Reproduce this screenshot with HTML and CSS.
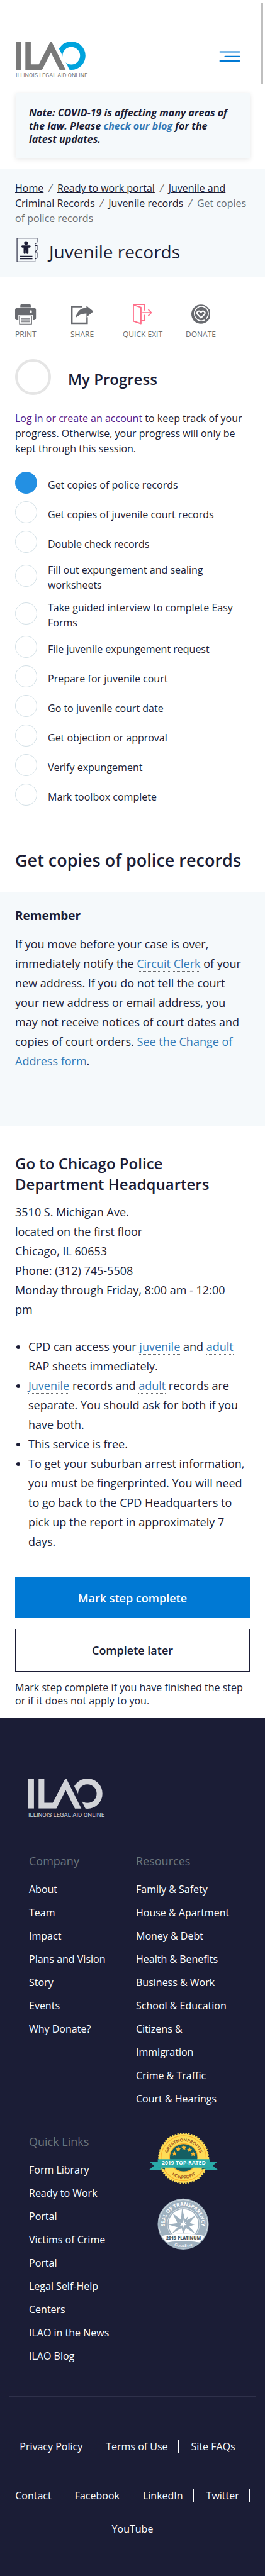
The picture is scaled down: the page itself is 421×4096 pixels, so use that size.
FILE: index.html
```html
<!DOCTYPE html>
<html lang="en">
<head>
<meta charset="utf-8">
<meta name="viewport" content="width=device-width, initial-scale=1">
<title>Get copies of police records | Illinois Legal Aid Online</title>
<link rel="stylesheet" href="styles.css">
</head>
<body>
<svg class="defs" aria-hidden="true">
  <defs>
    <clipPath id="ring-cut"><path d="M63 0H112V46H86Z"/></clipPath>
    <clipPath id="mark-cut"><path d="M0 0H112V45H0Z"/></clipPath>
    <symbol id="logo" class="logo-symbol" viewBox="0 0 112 58">
      <g clip-path="url(#mark-cut)" fill="none" stroke="currentColor">
        <path stroke-width="8.4" d="M4.2 0V45"/>
        <path stroke-width="8.600" d="M19.6 -2V40.6H39.2L56 8L77 50"/>
      </g>
      <circle class="logo-ring" cx="88.3" cy="22.6" r="18.2" fill="none" stroke-width="8.6" clip-path="url(#ring-cut)"/>
      <text class="logo-name" x="0" y="57">ILLINOIS LEGAL AID ONLINE</text>
    </symbol>
    <path id="star" d="M0 -20L6 -7L20 -5L10 5L12 18L0 12L-12 18L-10 5L-20 -5L-6 -7Z"/>
  </defs>
</svg>
<div class="scroll-thumb" aria-hidden="true"></div>

<header class="site-header">
  <a class="logo" href="#" aria-label="Illinois Legal Aid Online"><svg viewBox="0 0 112 58"><use href="#logo"/></svg></a>
  <button class="menu-button" type="button" aria-label="Menu">
    <svg viewBox="0 0 34 18"><path d="M1.500 1.500H32.500M9.500 8.700H32.500M1.500 15.900H32.500"/></svg>
  </button>
</header>

<p class="notice">Note: COVID-19 is affecting many areas of the law. Please <a href="#">check our blog</a> for the latest updates.</p>

<section class="intro">
  <nav class="breadcrumb" aria-label="Breadcrumb">
    <a href="#">Home</a><i>/</i> <a href="#">Ready to work portal</a><i>/</i> <a href="#">Juvenile and Criminal Records</a><i>/</i> <a href="#">Juvenile records</a><i>/</i> <span>Get copies of police records</span>
  </nav>
  <div class="topic">
    <svg class="topic-icon" viewBox="0 0 122 142" aria-hidden="true">
      <g fill="none" stroke="#1b1d36" stroke-width="4">
        <path d="M120 3H3V139H107V38Q107 34 112 33Q119 32 119 24V3"/>
        <path d="M107 45H119V69Q119 75 108 78M107 88H119V113Q119 119 108 123"/>
        <path d="M18 107H92M18 122H92" stroke-width="5"/>
      </g>
      <g fill="#1b1d36"><circle cx="55" cy="31" r="11"/><path d="M33 45H77Q82 46 82 51T77 57H69V88Q68 94 63 94T57 88V74H53V88Q52 94 47 94T41 88V57H33Q28 56 28 51T33 45Z"/></g>
    </svg>
    <h2>Juvenile records</h2>
  </div>
</section>

<main>
  <section class="content">
    <ul class="tools">
      <li><a href="#">
        <svg viewBox="0 0 166 164" aria-hidden="true"><g fill="#696b70"><path d="M41 27V14Q42 1 55 0H110Q123 1 124 14V27Z"/><path d="M15 33H151Q165 34 165 48V115Q164 128 151 129H139V89H26V129H15Q1 128 0 115V48Q1 34 15 33Z"/></g><rect x="115" y="52" width="17" height="18" rx="3" fill="#fff"/><path d="M34 96H131V160H34Z" fill="#fff" stroke="#696b70" stroke-width="5"/><path d="M48 115H118M48 129H118M48 143H118" stroke="#696b70" stroke-width="5"/></svg>
        PRINT</a></li>
      <li><a href="#">
        <svg viewBox="0 0 176 164" aria-hidden="true"><path d="M85 23H6V154H126V105" fill="none" stroke="#696b70" stroke-width="12"/><path d="M34 113Q52 32 121 32V15L176 60L121 106V77Q70 76 34 113Z" fill="#696b70"/></svg>
        SHARE</a></li>
      <li><a href="#">
        <svg viewBox="0 0 166 176" aria-hidden="true"><g fill="none" stroke="#ff708b" stroke-width="10" stroke-linejoin="round"><path d="M5 10Q5 5 12 5H101V57M101 93V144H73M5 10L69 30V168L5 147ZM81 75H156M131 49L157 75L131 102"/></g></svg>
        QUICK EXIT</a></li>
      <li><a href="#">
        <svg viewBox="0 0 154 166" aria-hidden="true"><circle cx="77" cy="83" r="77" fill="#696b70"/><g fill="none" stroke="#fff" stroke-width="8" stroke-linecap="round"><path d="M104 131A56 58 0 1 1 122 117"/><path d="M77 113L47 82C38 65 61 48 77 68C93 48 116 65 107 82Z" stroke-width="10"/></g></svg>
        DONATE</a></li>
    </ul>

    <div class="progress">
      <span class="progress-ring"></span>
      <h2>My Progress</h2>
    </div>
    <p class="login"><a href="#">Log in or create an account</a> to keep track of your progress. Otherwise, your progress will only be kept through this session.</p>

    <ol class="steps">
      <li class="current"><span>Get copies of police records</span></li>
      <li><span>Get copies of juvenile court records</span></li>
      <li><span>Double check records</span></li>
      <li><span>Fill out expungement and sealing worksheets</span></li>
      <li><span>Take guided interview to complete Easy Forms</span></li>
      <li><span>File juvenile expungement request</span></li>
      <li><span>Prepare for juvenile court</span></li>
      <li><span>Go to juvenile court date</span></li>
      <li><span>Get objection or approval</span></li>
      <li><span>Verify expungement</span></li>
      <li><span>Mark toolbox complete</span></li>
    </ol>
    <h1>Get copies of police records</h1>
  </section>

  <section class="remember">
    <h3>Remember</h3>
    <p>If you move before your case is over, immediately notify the <a class="term" href="#">Circuit Clerk</a> of your new address. If you do not tell the court your new address or email address, you may not receive notices of court dates and copies of court orders. <a href="#">See the Change of Address form</a>.</p>
  </section>

  <section class="content visit">
    <h2>Go to Chicago Police Department Headquarters</h2>
    <p class="address">3510 S. Michigan Ave.<br>located on the first floor<br>Chicago, IL 60653<br>Phone: (312) 745-5508<br>Monday through Friday, 8:00 am - 12:00 pm</p>
    <ul class="facts">
      <li>CPD can access your <a class="term" href="#">juvenile</a> and <a class="term" href="#">adult</a> RAP sheets immediately.</li>
      <li><a class="term" href="#">Juvenile</a> records and <a class="term" href="#">adult</a> records are separate. You should ask for both if you have both.</li>
      <li>This service is free.</li>
      <li>To get your suburban arrest information, you must be fingerprinted. You will need to go back to the CPD Headquarters to pick up the report in approximately 7 days.</li>
    </ul>
    <button class="button primary" type="button">Mark step complete</button>
    <button class="button" type="button">Complete later</button>
    <p class="hint">Mark step complete if you have finished the step or if it does not apply to you.</p>
  </section>
</main>

<footer class="site-footer">
  <a class="logo" href="#" aria-label="Illinois Legal Aid Online"><svg viewBox="0 0 112 58"><use href="#logo"/></svg></a>
  <div class="footer-grid">
    <nav aria-labelledby="f-company">
      <h4 id="f-company">Company</h4>
      <ul>
        <li><a href="#">About</a></li><li><a href="#">Team</a></li><li><a href="#">Impact</a></li><li><a href="#">Plans and Vision</a></li><li><a href="#">Story</a></li><li><a href="#">Events</a></li><li><a href="#">Why Donate?</a></li>
      </ul>
    </nav>
    <nav aria-labelledby="f-resources">
      <h4 id="f-resources">Resources</h4>
      <ul>
        <li><a href="#">Family &amp; Safety</a></li><li><a href="#">House &amp; Apartment</a></li><li><a href="#">Money &amp; Debt</a></li><li><a href="#">Health &amp; Benefits</a></li><li><a href="#">Business &amp; Work</a></li><li><a href="#">School &amp; Education</a></li><li><a href="#">Citizens &amp; Immigration</a></li><li><a href="#">Crime &amp; Traffic</a></li><li><a href="#">Court &amp; Hearings</a></li>
      </ul>
    </nav>
    <nav aria-labelledby="f-quick">
      <h4 id="f-quick">Quick Links</h4>
      <ul>
        <li><a href="#">Form Library</a></li><li><a href="#">Ready to Work Portal</a></li><li><a href="#">Victims of Crime Portal</a></li><li><a href="#">Legal Self-Help Centers</a></li><li><a href="#">ILAO in the News</a></li><li><a href="#">ILAO Blog</a></li>
      </ul>
    </nav>
    <div class="badges">
      <svg class="badge-top" viewBox="60 66 554 416" role="img" aria-label="GreatNonprofits 2019 Top-Rated Nonprofit">
        <circle cx="338" cy="274" r="196" fill="#fedd57"/>
        <circle cx="338" cy="274" r="198" fill="none" stroke="#fedd57" stroke-width="9" stroke-dasharray="12 10"/>
        <circle cx="338" cy="274" r="179" fill="none" stroke="#fbb12f" stroke-width="6"/>
        <circle cx="338" cy="270" r="112" fill="#145f63" stroke="#fbb12f" stroke-width="7"/>
        <g fill="#fcb42d"><use href="#star" x="340" y="189"/><use href="#star" x="295" y="202"/><use href="#star" x="385" y="206"/><use href="#star" x="265" y="236"/><use href="#star" x="413" y="239"/></g>
        <path d="M66 301H160V366H66L104 334ZM608 301H510V366H608L570 334Z" fill="#2aaaa8"/>
        <path d="M133 349H190V364ZM545 349H482V364Z" fill="#145f63"/>
        <path d="M133 282H545V349H133Z" fill="#2aaaa8"/>
        <path id="arc-top" d="M206 274A132 132 0 0 1 470 274" fill="none"/>
        <path id="arc-low" d="M175 274A163 163 0 0 0 501 274" fill="none"/>
        <text class="gn-arc"><textPath href="#arc-top" startOffset="50%" text-anchor="middle">GREATNONPROFITS</textPath></text>
        <text class="gn-arc"><textPath href="#arc-low" startOffset="50%" text-anchor="middle">NONPROFIT</textPath></text>
        <text class="gn-band" x="339" y="328" text-anchor="middle">2019 TOP-RATED</text>
      </svg>
      <svg class="badge-seal" viewBox="130 598 406 410" role="img" aria-label="GuideStar Seal of Transparency 2019 Platinum">
        <clipPath id="seal-cut"><circle cx="333" cy="803" r="193"/></clipPath>
        <circle cx="333" cy="803" r="201" fill="#9fb1bf"/>
        <circle cx="333" cy="803" r="192" fill="none" stroke="#fff" stroke-width="3"/>
        <circle cx="335" cy="803" r="127" fill="none" stroke="#fff" stroke-width="3"/>
        <circle cx="335" cy="803" r="117" fill="#fff"/>
        <path d="M324 676L347 766L371 740L363 773L434 733L384 794L424 806L382 822L430 882L354 833L334 880L320 834L240 880L290 828L212 806L288 795L250 718L316 768Z" fill="#9fb1bf"/>
        <path d="M333 765L341 793L357 783L346 802L361 811L342 812L333 832L327 812L306 820L320 804L304 789L326 795Z" fill="#fff"/>
        <g clip-path="url(#seal-cut)">
          <path d="M130 908Q333 848 536 908V1010H130Z" fill="#9fb1bf"/>
          <path d="M120 908Q333 848 546 908V965Q333 908 120 965Z" fill="#fff"/>
        </g>
        <path id="arc-seal" d="M192 840A145 145 0 1 1 474 840" fill="none"/>
        <path id="arc-star" d="M240 970Q334 998 430 970" fill="none"/>
        <text class="seal-arc"><textPath href="#arc-seal" startOffset="50%" text-anchor="middle">SEAL OF TRANSPARENCY</textPath></text>
        <text class="seal-band" x="336" y="927" text-anchor="middle">2019 PLATINUM</text>
        <text class="seal-name"><textPath href="#arc-star" startOffset="50%" text-anchor="middle">GuideStar</textPath></text>
      </svg>
    </div>
  </div>
  <div class="legal">
    <ul>
      <li><a href="#">Privacy Policy</a></li><li><a href="#">Terms of Use</a></li><li><a href="#">Site FAQs</a></li>
    </ul>
    <ul class="social">
      <li><a href="#">Contact</a></li><li><a href="#">Facebook</a></li><li><a href="#">LinkedIn</a></li><li><a href="#">Twitter</a></li><li><a href="#">YouTube</a></li>
    </ul>
  </div>
</footer>
</body>
</html>
```
FILE: styles.css
```css
* { box-sizing: border-box; }

body {
  margin: 0;
  position: relative;
  background: #fff;
  color: #1b1d36;
  font: 16px/24px "Open Sans", "Noto Sans", sans-serif;
}

h1, h2, h3, h4, p, ul, ol { margin: 0; padding: 0; }
ul, ol { list-style: none; }
a { color: #337ab7; text-decoration: none; }
svg { display: block; }

.defs { position: absolute; width: 0; height: 0; }

.scroll-thumb {
  position: absolute;
  top: 4px;
  right: 3px;
  width: 4px;
  height: 129px;
  background: #bfbfbf;
}

/* Header */
.site-header {
  display: flex;
  justify-content: space-between;
  align-items: flex-start;
  padding: 66px 39px 24px 25px;
}
.logo { --ring: #00a3dd; display: block; color: #797979; }
.site-header .logo { width: 112px; }
.logo svg, .logo-symbol { overflow: visible; }
.logo-ring { stroke: var(--ring); }
.logo-name { font: 400 9px Roboto, sans-serif; fill: currentColor; }
.menu-button {
  width: 34px;
  padding: 15px 0;
  border: 0;
  background: none;
}
.menu-button path { fill: none; stroke: #0079d4; stroke-width: 2; stroke-linecap: round; }

.notice {
  margin: 0 24px 17px 25px;
  padding: 21px 35px 19px 21px;
  background: #f5f9fb;
  box-shadow: 0 2px 8px rgba(0, 0, 0, .1);
  font-weight: 700;
  font-style: italic;
  line-height: 21px;
}

/* Breadcrumb and topic */
.intro { padding: 19px 24px 23px; background: #f5f9fb; }
.breadcrumb { color: #6d6e71; }
.breadcrumb a { color: #1b1d36; text-decoration: underline; }
.breadcrumb i { padding: 0 4px 0 8px; }
.topic { display: flex; gap: 18px; margin-top: 19px; }
.topic-icon { width: 34px; height: 39px; margin-left: 2px; }
.topic h2 { padding-top: 4px; font-size: 28px; line-height: 36px; font-weight: 400; }

.content { padding: 42px 24px 0; }

/* Page tools */
.tools {
  display: grid;
  grid-template-columns: 88px 83px 100px auto;
  justify-items: start;
}
.tools a {
  display: flex;
  flex-direction: column;
  align-items: center;
  gap: 8px;
  color: #6d6e71;
  font-size: 12px;
  line-height: 16px;
}
.tools svg { height: 33px; }

.progress { display: flex; gap: 27px; margin-top: 31px; }
.progress-ring { width: 57px; height: 57px; border: 4px solid #e5e5e5; border-radius: 50%; }
.progress h2 { padding-top: 16px; font-size: 24px; line-height: 32px; font-weight: 600; }
.login { margin-top: 25px; }
.login a { color: #551a8b; }

.steps { margin-top: 19px; }
.steps li {
  display: flex;
  align-items: center;
  gap: 17px;
  min-height: 47px;
  padding: 3px 0;
}
.steps li::before {
  content: "";
  flex: none;
  width: 33px;
  height: 33px;
  border: 1px solid #d3e0e6;
  border-radius: 50%;
}
.steps .current::before { background: #2390e3; border-color: #2390e3; }
.steps span { padding-top: 6px; }

h1 { margin: 61px 0 30px; font-size: 27px; line-height: 40px; font-weight: 600; }

/* Reminder */
.remember { padding: 25px 24px 88px; background: #f5f9fb; }
.remember h3 { margin-bottom: 17px; font-size: 19px; line-height: 26px; }
.remember p, .address, .facts { font-size: 18px; line-height: 31px; }
.term { border-bottom: 1px dotted #6d6e71; text-decoration: underline dotted 1px; }

/* Visit details */
.visit { padding-bottom: 16px; }
.visit h2 { margin-bottom: 13px; font-size: 24px; line-height: 33px; font-weight: 600; }
.address { padding-right: 20px; }
.facts { margin: 28px 0 41px; padding-left: 21px; list-style: disc; }
.button {
  display: block;
  width: 100%;
  height: 68px;
  border: 1px solid #1b1d36;
  background: #fff;
  color: #1b1d36;
  font: 600 18px/24px "Open Sans", "Noto Sans", sans-serif;
}
.button.primary { height: 65px; margin-bottom: 17px; border-color: #0079d4; background: #0079d4; color: #fff; }
.hint { margin-top: 15px; line-height: 21px; }

/* Footer */
.site-footer { padding-top: 97px; background: #1b1d36; line-height: 37px; }
.site-footer a { color: #fff; }
.site-footer .logo { --ring: #d2d3d8; width: 119px; margin-left: 45px; color: #d2d3d8; }
.footer-grid {
  display: grid;
  grid-template-columns: 1fr 1fr;
  row-gap: 31px;
  padding: 51px 35px 45px 46px;
}
.footer-grid > * { padding-right: 20px; }
.footer-grid h4 { margin-bottom: 8px; color: #6b767d; font-size: 18px; font-weight: 400; }
.footer-grid .badges { display: flex; flex-direction: column; align-items: center; gap: 22px; padding-top: 3px; }
.badge-top { width: 111px; }
.badge-seal { width: 82px; }
.gn-arc { font: 700 35px Lato, sans-serif; fill: #9c5423; }
.gn-band { font: 700 43px "Open Sans", sans-serif; fill: #fff; }
.seal-arc { font: 700 40px "Open Sans", sans-serif; fill: #fff; }
.seal-band { font: 800 34px "Open Sans", sans-serif; fill: #46565f; }
.seal-name { font: small-caps 600 32px Lato, sans-serif; fill: #fff; }

.legal {
  display: grid;
  gap: 58px;
  margin: 0 15px;
  padding: 69px 0 65px;
  border-top: 1px solid #2f314a;
}
.legal ul { display: flex; flex-wrap: wrap; justify-content: center; gap: 33px 20px; line-height: 20px; }
.legal li { padding-right: 16px; border-right: 1px solid #fff; }
.legal li:last-child { border-right: 0; }
.legal .social li:last-child { padding-right: 0; }
```
